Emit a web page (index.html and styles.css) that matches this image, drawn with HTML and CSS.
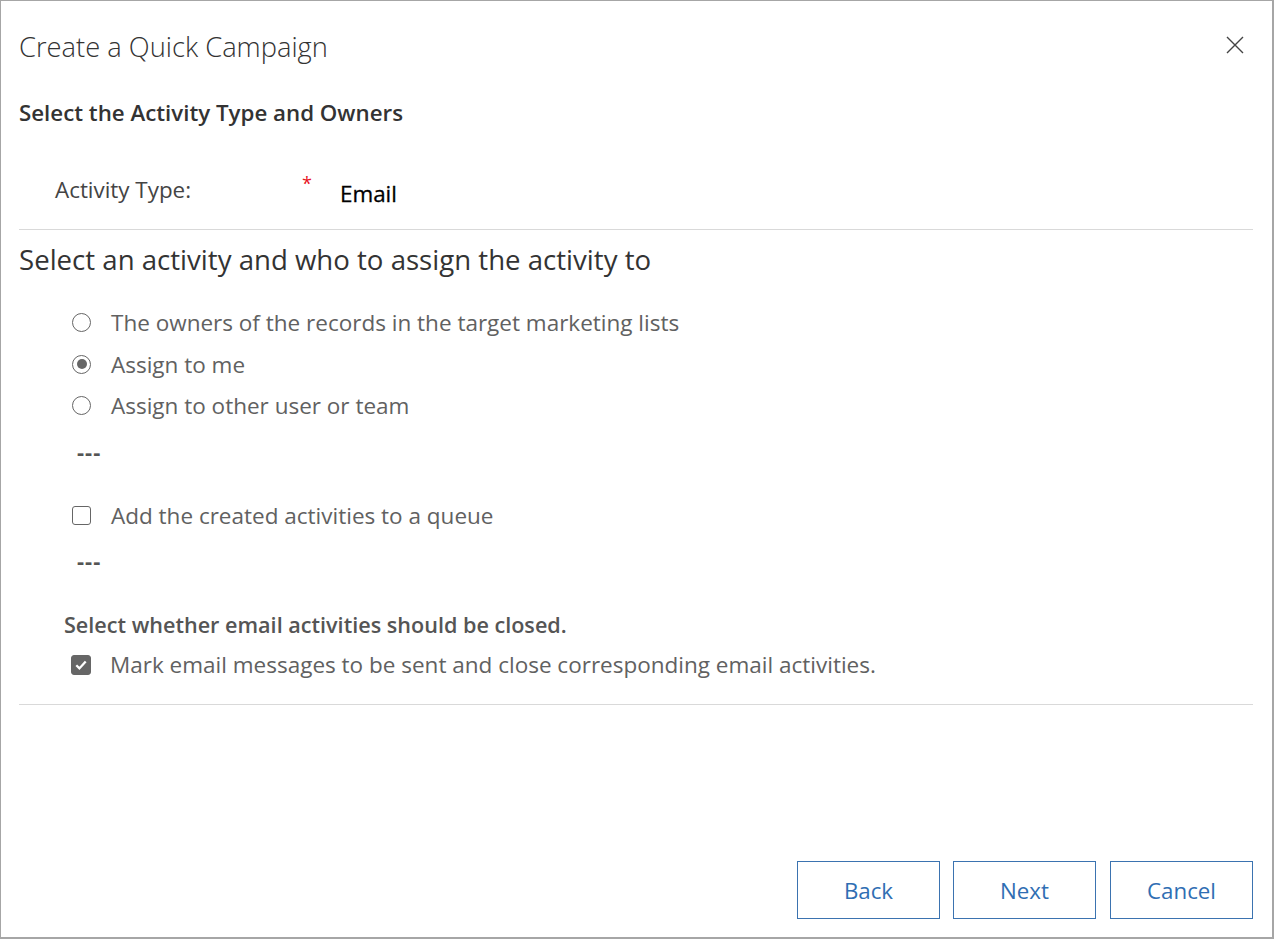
FILE: index.html
```html
<!DOCTYPE html>
<html>
<head>
<meta charset="utf-8">
<link rel="stylesheet" href="styles.css">
</head>
<body>
<div class="dialog">
  <header class="head">
    <h1 class="title">Create a Quick Campaign</h1>
    <button class="close" aria-label="Close">
      <svg width="18" height="18" viewBox="0 0 18 18"><path d="M1 1 L17 17 M17 1 L1 17" stroke="#444" stroke-width="1.4" fill="none"/></svg>
    </button>
  </header>
  <h2 class="section">Select the Activity Type and Owners</h2>
  <div class="field">
    <span class="field-label">Activity Type:</span>
    <span class="req">*</span>
    <span class="field-value">Email</span>
  </div>
  <div class="rule"></div>
  <h3 class="sub">Select an activity and who to assign the activity to</h3>
  <div class="options">
    <label class="opt"><span class="radio"></span>The owners of the records in the target marketing lists</label>
    <label class="opt"><span class="radio on"></span>Assign to me</label>
    <label class="opt"><span class="radio"></span>Assign to other user or team</label>
  </div>
  <div class="dash">---</div>
  <label class="opt chk-row"><span class="box"></span>Add the created activities to a queue</label>
  <div class="dash dash2">---</div>
  <div class="close-q">Select whether email activities should be closed.</div>
  <label class="opt mark"><span class="box checked"><svg width="14" height="14" viewBox="0 0 14 14"><path d="M2.3 7.3 L5.4 10.4 L11.7 3.4" stroke="#fff" stroke-width="2.3" fill="none"/></svg></span>Mark email messages to be sent and close corresponding email activities.</label>
  <div class="rule rule2"></div>
  <div class="spacer"></div>
  <footer class="actions">
    <button class="btn">Back</button>
    <button class="btn">Next</button>
    <button class="btn">Cancel</button>
  </footer>
</div>
</body>
</html>
```
FILE: styles.css
```css
html, body {
  margin: 0;
  padding: 0;
  background: #fff;
}
body {
  font-family: "Open Sans", "Noto Sans", "Liberation Sans", sans-serif;
  color: #333;
}
.dialog {
  box-sizing: border-box;
  width: 1274px;
  height: 939px;
  border: 1px solid #a6a6a6;
  border-right-width: 2px;
  border-bottom-width: 2px;
  padding: 0 19px 0 18px;
  display: flex;
  flex-direction: column;
}
.head {
  display: flex;
  justify-content: space-between;
  align-items: center;
  height: 92px;
}
.title {
  margin: 0;
  font-size: 27.3px;
  font-weight: 300;
  color: #333;
  position: relative;
  top: -1px;
}
.close {
  border: 0;
  background: none;
  padding: 0;
  width: 20px;
  height: 20px;
  margin-right: 8px;
  margin-top: -4px;
  display: flex;
  align-items: center;
  justify-content: center;
}
.section {
  margin: 0;
  font-size: 22.3px;
  font-weight: 600;
  color: #333;
  height: 40px;
  line-height: 40px;
}
.field {
  box-sizing: border-box;
  display: flex;
  align-items: center;
  height: 96px;
  padding-top: 16px;
  padding-left: 36px;
  font-size: 22.4px;
}
.field-label {
  color: #444;
  width: 247px;
}
.req {
  color: #e81123;
  font-size: 18px;
  width: 38px;
  position: relative;
  top: -6px;
}
.field-value {
  color: #000;
  font-weight: 500;
  font-size: 22.4px;
  position: relative;
  top: 4px;
  -webkit-text-stroke: 0.3px #000;
}
.rule {
  height: 1px;
  background: #d9d9d9;
}
.sub {
  margin: 0;
  font-size: 27.6px;
  font-weight: 400;
  color: #333;
  height: 58px;
  line-height: 58px;
}
.options {
  display: flex;
  flex-direction: column;
  padding-top: 14px;
}
.opt {
  display: flex;
  align-items: center;
  height: 41.5px;
  font-size: 22.5px;
  color: #616161;
  padding-left: 53px;
}
.radio {
  box-sizing: border-box;
  width: 19px;
  height: 19px;
  border: 1.5px solid #666;
  border-radius: 50%;
  margin-right: 20px;
  flex: none;
  display: flex;
  align-items: center;
  justify-content: center;
}
.radio.on::after {
  content: "";
  width: 10px;
  height: 10px;
  border-radius: 50%;
  background: #666;
}
.dash {
  padding-left: 58px;
  font-size: 22px;
  font-weight: 700;
  letter-spacing: 1px;
  color: #555;
  height: 28px;
  line-height: 28px;
  margin-top: 10px;
}
.chk-row {
  margin-top: 30px;
}
.box {
  box-sizing: border-box;
  width: 19px;
  height: 19px;
  border: 1.5px solid #666;
  border-radius: 3px;
  margin-right: 20px;
  flex: none;
  display: flex;
  align-items: center;
  justify-content: center;
}
.box.checked {
  background: #666;
  border-color: #666;
  width: 20px;
  height: 20px;
  margin-right: 19px;
}
.dash2 {
  margin-top: 10px;
}
.close-q {
  padding-left: 45px;
  font-size: 21.6px;
  font-weight: 600;
  color: #555;
  margin-top: 37px;
  height: 28px;
  line-height: 28px;
}
.mark {
  padding-left: 52px;
  margin-top: 5px;
  font-size: 22.5px;
}
.rule2 {
  margin-top: 18px;
}
.spacer {
  flex: 1;
}
.actions {
  display: flex;
  justify-content: flex-end;
  gap: 13px;
  padding-bottom: 18px;
}
.btn {
  width: 143px;
  height: 58px;
  background: #fff;
  border: 1px solid #3b73b0;
  color: #2f6eb3;
  font-family: inherit;
  font-size: 22.3px;
  padding: 0;
}
.btn + .btn + .btn {
  margin-left: 1px;
}
```
